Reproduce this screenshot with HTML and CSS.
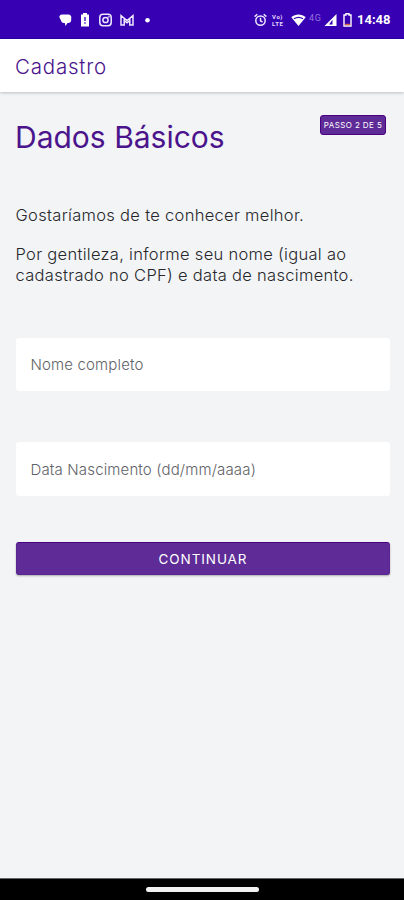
FILE: index.html
```html
<!DOCTYPE html>
<html lang="pt-BR">
<head>
<meta charset="utf-8">
<title>Cadastro</title>
<link rel="stylesheet" href="styles.css">
</head>
<body>
<div class="status">
  <div class="status-left">
    <svg width="13" height="14" viewBox="0 0 13 14"><path d="M3 1.500h6.500a3 3 0 0 1 2.700 3.800v2a3 3 0 0 1-3 2.700H8.500L6.500 13 5.800 10H4.500A3 3 0 0 1 2 7.500L.5 4.500C0 3 1.200 1.500 3 1.500z" fill="#fff"/></svg>
    <svg width="10" height="14" viewBox="0 0 10 14"><path d="M3 0h4v1.500h2v12h-8v-12h2z" fill="#fff"/><path d="M5 4v4M5 9.200v1.600" stroke="#3700b3" stroke-width="1.300"/></svg>
    <svg width="13" height="14" viewBox="0 0 13 14" fill="none" stroke="#eee8ff" stroke-width="1.500"><rect x=".8" y="1.300" width="11.400" height="11.400" rx="3.200"/><circle cx="6.500" cy="7" r="2.600"/><circle cx="9.700" cy="3.800" r=".3"/></svg>
    <svg width="14" height="14" viewBox="0 0 14 14" fill="none" stroke="#eee8ff" stroke-width="1.500"><path d="M1 12V2.500l6 5 6-5V12H9.800V7.600L7 9.800 4.200 7.600V12zM4.200 7.600V4.900M9.800 7.600V4.900"/></svg>
    <svg width="5" height="14" viewBox="0 0 5 14"><circle cx="2.500" cy="7.200" r="2.300" fill="#fff"/></svg>
  </div>
  <div class="status-right">
    <svg class="alarm" width="13" height="14" viewBox="0 0 13 14" fill="none" stroke="#eee8ff" stroke-width="1.500"><circle cx="6.500" cy="7.600" r="4.700"/><path d="M.6 3.600 3.300 1.300M12.400 3.600 9.700 1.300M6.500 4.800v3l2 1.200"/></svg>
    <div class="volte"><span>Vo)</span><span>LTE</span></div>
    <svg class="wifi" width="15" height="14" viewBox="0 0 15 14"><path d="M.3 4.200C4.500.6 10.500.6 14.700 4.200L7.500 13z" fill="#fff"/><path d="M3 5.700Q7.500 2.900 12 5.700" stroke="#3700b3" stroke-width="1.300" fill="none"/></svg>
    <span class="net">4G</span>
    <svg class="signal" width="13" height="14" viewBox="0 0 13 14"><path d="M12.500 1v12H.5z" fill="#fff"/><path d="M8.500 6.800v4.700H5z" fill="#3700b3"/></svg>
    <svg class="battery" width="9" height="14" viewBox="0 0 9 14"><path d="M3 .8h3V2h2v11H1V2h2z" fill="none" stroke="#fff" stroke-width="1.400"/><path d="M1.700 11.500h5.600" stroke="#d4683f" stroke-width="1.400"/></svg>
    <span class="time">14:48</span>
  </div>
</div>
<header class="bar">Cadastro</header>
<main>
  <div class="heading">
    <h1>Dados Básicos</h1>
    <span class="step">PASSO 2 DE 5</span>
  </div>
  <p class="intro">Gostaríamos de te conhecer melhor.</p>
  <p class="details">Por gentileza, informe seu nome (igual ao<br>cadastrado no CPF) e data de nascimento.</p>
  <input class="field name" type="text" placeholder="Nome completo">
  <input class="field birth" type="text" placeholder="Data Nascimento (dd/mm/aaaa)">
  <button class="submit" type="button">CONTINUAR</button>
</main>
<footer class="nav"><div class="handle"></div></footer>
</body>
</html>
```
FILE: styles.css
```css
* { box-sizing: border-box; }
body {
  margin: 0;
  width: 404px;
  height: 900px;
  overflow: hidden;
  display: flex;
  flex-direction: column;
  background: #f2f4f6;
  font-family: Inter, "Liberation Sans", sans-serif;
  color: #27272b;
}
svg { display: block; flex: none; }
.status {
  height: 39px;
  flex: none;
  background: #3700b3;
  border-bottom: 1px solid #2a00aa;
  display: flex;
  justify-content: space-between;
  align-items: center;
  padding: 2px 14px 0 59px;
  color: #fff;
}
.status-left, .status-right { display: flex; align-items: center; }
.status-left { gap: 8px; }
.status-left svg:nth-child(3) { margin-left: 1px; }
.status-left svg:last-child { margin-left: 3px; }
.volte {
  width: 15px;
  margin-left: 5px;
  display: flex;
  flex-direction: column;
  font: 700 6px/7px Roboto, sans-serif;
  letter-spacing: .6px;
  color: #e6dcff;
}
.wifi { margin-left: 4px; }
.net {
  width: 15px;
  margin: -5px 0 0 3px;
  font: 400 9px/10px Roboto, sans-serif;
  letter-spacing: .6px;
  color: #9673dc;
}
.battery { margin-left: 6px; }
.time {
  width: 33px;
  margin-left: 5px;
  font: 700 13px/16px Roboto, sans-serif;
  white-space: nowrap;
}
.bar {
  height: 53px;
  flex: none;
  padding-left: 15px;
  background: #fff;
  box-shadow: 0 1px 3px rgba(0, 0, 0, .22);
  color: #4b148c;
  font-size: 20.5px;
  font-weight: 300;
  line-height: 56px;
  letter-spacing: .8px;
}
main {
  flex: 1;
  display: flex;
  flex-direction: column;
  padding: 22px 14px 0 16px;
}
.heading {
  display: flex;
  justify-content: space-between;
  align-items: flex-start;
  height: 91px;
  padding-right: 4px;
}
h1 {
  margin: 0 0 0 -1px;
  color: #4b148c;
  font-size: 30px;
  font-weight: 400;
  line-height: 46px;
  white-space: nowrap;
}
.step {
  width: 66px;
  height: 20px;
  margin-top: 1px;
  border: 1px solid #4b0082;
  border-radius: 3px;
  background: #5e2b97;
  color: #fff;
  font-size: 8px;
  font-weight: 400;
  line-height: 19px;
  letter-spacing: .4px;
  text-align: center;
  white-space: nowrap;
}
p {
  margin: 0;
  font-size: 16.5px;
  font-weight: 300;
  line-height: 21px;
  letter-spacing: .3px;
  white-space: nowrap;
}
.intro, .details { margin-left: -.5px; }
.details { margin-top: 18px; }
.field {
  width: 100%;
  flex: none;
  border: 0;
  border-radius: 3px;
  background: #fff;
  padding: 0 14.5px;
  font: 300 15px Inter, sans-serif;
  letter-spacing: .15px;
}
.field::placeholder { color: #5f6368; opacity: 1; }
.name { height: 53px; margin-top: 52px; }
.birth { height: 54px; margin-top: 51px; }
.submit {
  width: 100%;
  height: 33px;
  margin-top: 46px;
  padding: 0;
  flex: none;
  border: 1px solid #5a2592;
  border-top-color: #4b0082;
  border-radius: 3px;
  background: #5e2b97;
  box-shadow: 0 1px 2px rgba(0, 0, 0, .3);
  color: #fff;
  font: 400 13.5px Inter, sans-serif;
  letter-spacing: .9px;
}
.nav {
  height: 22px;
  flex: none;
  background: #000;
  border-top: 1px solid #666;
  display: flex;
  justify-content: center;
  align-items: center;
}
.handle {
  width: 113px;
  height: 5px;
  border-radius: 3px;
  background: #f2f2f2;
}
```
